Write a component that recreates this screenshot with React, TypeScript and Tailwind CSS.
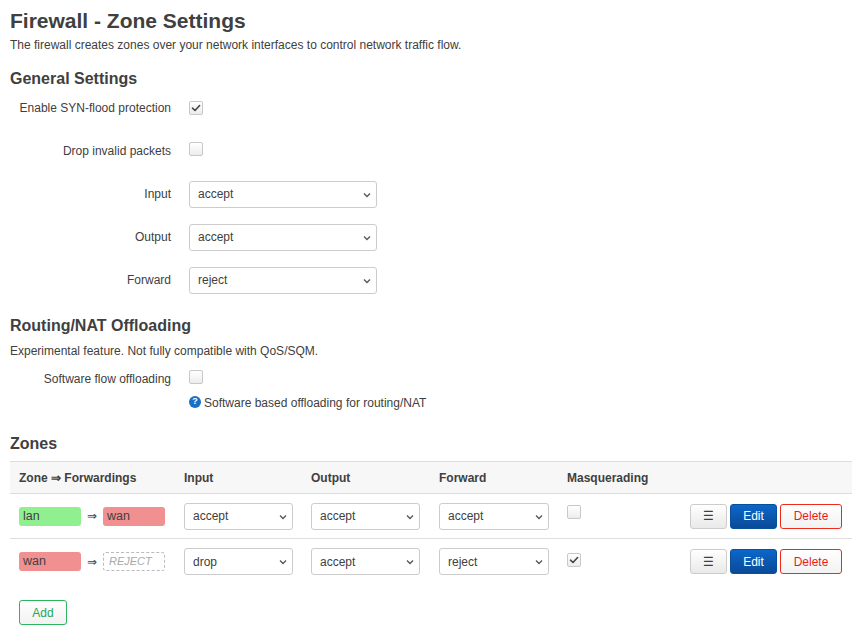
import React from 'react'

const txt = 'text-[#404040]'

function Check({ checked }: { checked?: boolean }) {
  return (
    <span className="inline-flex h-[14px] w-[14px] items-center justify-center rounded-[2px] border border-[#c8c8c8] bg-gradient-to-b from-white to-[#ececec]">
      {checked && (
        <svg width="10" height="10" viewBox="0 0 10 10" fill="none">
          <path d="M1.5 5.2 L4 7.5 L8.6 2.5" stroke="#444" strokeWidth="1.6" strokeLinecap="round" strokeLinejoin="round" />
        </svg>
      )}
    </span>
  )
}

function Select({ value, w = 'w-[188px]' }: { value: string; w?: string }) {
  return (
    <div className={`relative flex h-[27px] ${w} items-center rounded-[3px] border border-[#cccccc] bg-white pl-[8px] text-[12px] ${txt}`}>
      <span>{value}</span>
      <svg className="absolute right-[5px] top-[10px]" width="8" height="6" viewBox="0 0 8 6" fill="none">
        <path d="M1 1.5 L4 4.5 L7 1.5" stroke="#555" strokeWidth="1.3" />
      </svg>
    </div>
  )
}

function Row({ label, children }: { label: string; children: React.ReactNode }) {
  return (
    <div className="flex h-[26px] items-center">
      <div className={`w-[161px] text-right text-[12px] ${txt}`}>{label}</div>
      <div className="ml-[18px]">{children}</div>
    </div>
  )
}

function Badge({ name, color }: { name: string; color: string }) {
  return (
    <span className={`inline-flex h-[19px] w-[62px] items-center rounded-[3px] pl-[4px] text-[12.5px] ${txt} ${color}`}>{name}</span>
  )
}

function Actions() {
  return (
    <div className="flex gap-[3px]">
      <button className="flex h-[25px] w-[37px] items-center justify-center rounded-[3px] border border-[#cccccc] bg-gradient-to-b from-white to-[#e9e9e9] text-[12px] text-[#404040]">☰</button>
      <button className="flex h-[25px] w-[47px] items-center justify-center rounded-[3px] border border-[#0a4f9a] bg-gradient-to-b from-[#0b67c9] to-[#0a4a98] text-[12px] text-white">Edit</button>
      <button className="flex h-[25px] w-[62px] items-center justify-center rounded-[3px] border border-[#ee2a1f] bg-gradient-to-b from-white to-[#f2f2f2] text-[12px] text-[#ee1a1a]">Delete</button>
    </div>
  )
}

const cols = 'grid grid-cols-[165px_127px_128px_128px_1fr_auto] items-center'

export default function App() {
  return (
    <div className={`min-h-[630px] bg-white px-[10px] pt-[9px] ${txt}`} style={{ fontFamily: '"Liberation Sans", Arial, sans-serif' }}>
      <h1 className="text-[21px] font-bold leading-[24px]">Firewall - Zone Settings</h1>
      <p className="mt-[4px] text-[12px] leading-[16px]">The firewall creates zones over your network interfaces to control network traffic flow.</p>

      <h2 className="mt-[16px] text-[16px] font-bold leading-[20px]">General Settings</h2>
      <div className="mt-[6px] flex flex-col gap-[17px]">
        <Row label="Enable SYN-flood protection"><Check checked /></Row>
        <Row label="Drop invalid packets"><Check /></Row>
        <Row label="Input"><Select value="accept" /></Row>
        <Row label="Output"><Select value="accept" /></Row>
        <Row label="Forward"><Select value="reject" /></Row>
      </div>

      <h2 className="mt-[23px] text-[16px] font-bold leading-[20px]">Routing/NAT Offloading</h2>
      <p className="mt-[7px] text-[12px] leading-[16px]">Experimental feature. Not fully compatible with QoS/SQM.</p>
      <div className="mt-[7px]">
        <Row label="Software flow offloading"><Check /></Row>
      </div>
      <div className="ml-[179px] mt-[3px] flex h-[16px] items-center text-[12px]">
        <span className="mb-[3px] mr-[3px] flex h-[12px] w-[12px] items-center justify-center rounded-full bg-[#1b6fc7] text-[9px] font-bold leading-none text-white">?</span>
        Software based offloading for routing/NAT
      </div>

      <h2 className="mt-[23px] text-[16px] font-bold leading-[20px]">Zones</h2>
      <div className="mt-[7px] w-[842px]">
        <div className={`${cols} h-[33px] border-y border-[#dddddd] bg-[#f7f7f7] text-[12px] font-bold`}>
          <div className="pl-[9px]">Zone ⇒ Forwardings</div>
          <div className="pl-[9px]">Input</div>
          <div className="pl-[9px]">Output</div>
          <div className="pl-[9px]">Forward</div>
          <div className="pl-[9px]">Masquerading</div>
          <div />
        </div>
        <div className={`${cols} h-[45px] border-b border-[#dddddd]`}>
          <div className="flex items-center pl-[9px]">
            <Badge name="lan" color="bg-[#90f090]" />
            <span className="mx-[6px] text-[12px]">⇒</span>
            <Badge name="wan" color="bg-[#f09090]" />
          </div>
          <div className="pl-[9px]"><Select value="accept" w="w-[109px]" /></div>
          <div className="pl-[9px]"><Select value="accept" w="w-[109px]" /></div>
          <div className="pl-[9px]"><Select value="accept" w="w-[110px]" /></div>
          <div className="pb-[4px] pl-[9px]"><Check /></div>
          <div className="pr-[10px]"><Actions /></div>
        </div>
        <div className={`${cols} h-[45px]`}>
          <div className="flex items-center pl-[9px]">
            <Badge name="wan" color="bg-[#f09090]" />
            <span className="mx-[6px] text-[12px]">⇒</span>
            <span className="inline-flex h-[19px] w-[62px] items-center rounded-[3px] border border-dashed border-[#bbbbbb] pl-[5px] text-[11px] italic text-[#aaaaaa]">REJECT</span>
          </div>
          <div className="pl-[9px]"><Select value="drop" w="w-[109px]" /></div>
          <div className="pl-[9px]"><Select value="accept" w="w-[109px]" /></div>
          <div className="pl-[9px]"><Select value="reject" w="w-[110px]" /></div>
          <div className="pb-[4px] pl-[9px]"><Check checked /></div>
          <div className="pr-[10px]"><Actions /></div>
        </div>
      </div>
      <button className="ml-[9px] mt-[16px] flex h-[25px] w-[48px] items-center justify-center rounded-[3px] border border-[#2fb35f] bg-gradient-to-b from-white to-[#f2f2f2] text-[12px] text-[#25a653]">Add</button>
    </div>
  )
}
